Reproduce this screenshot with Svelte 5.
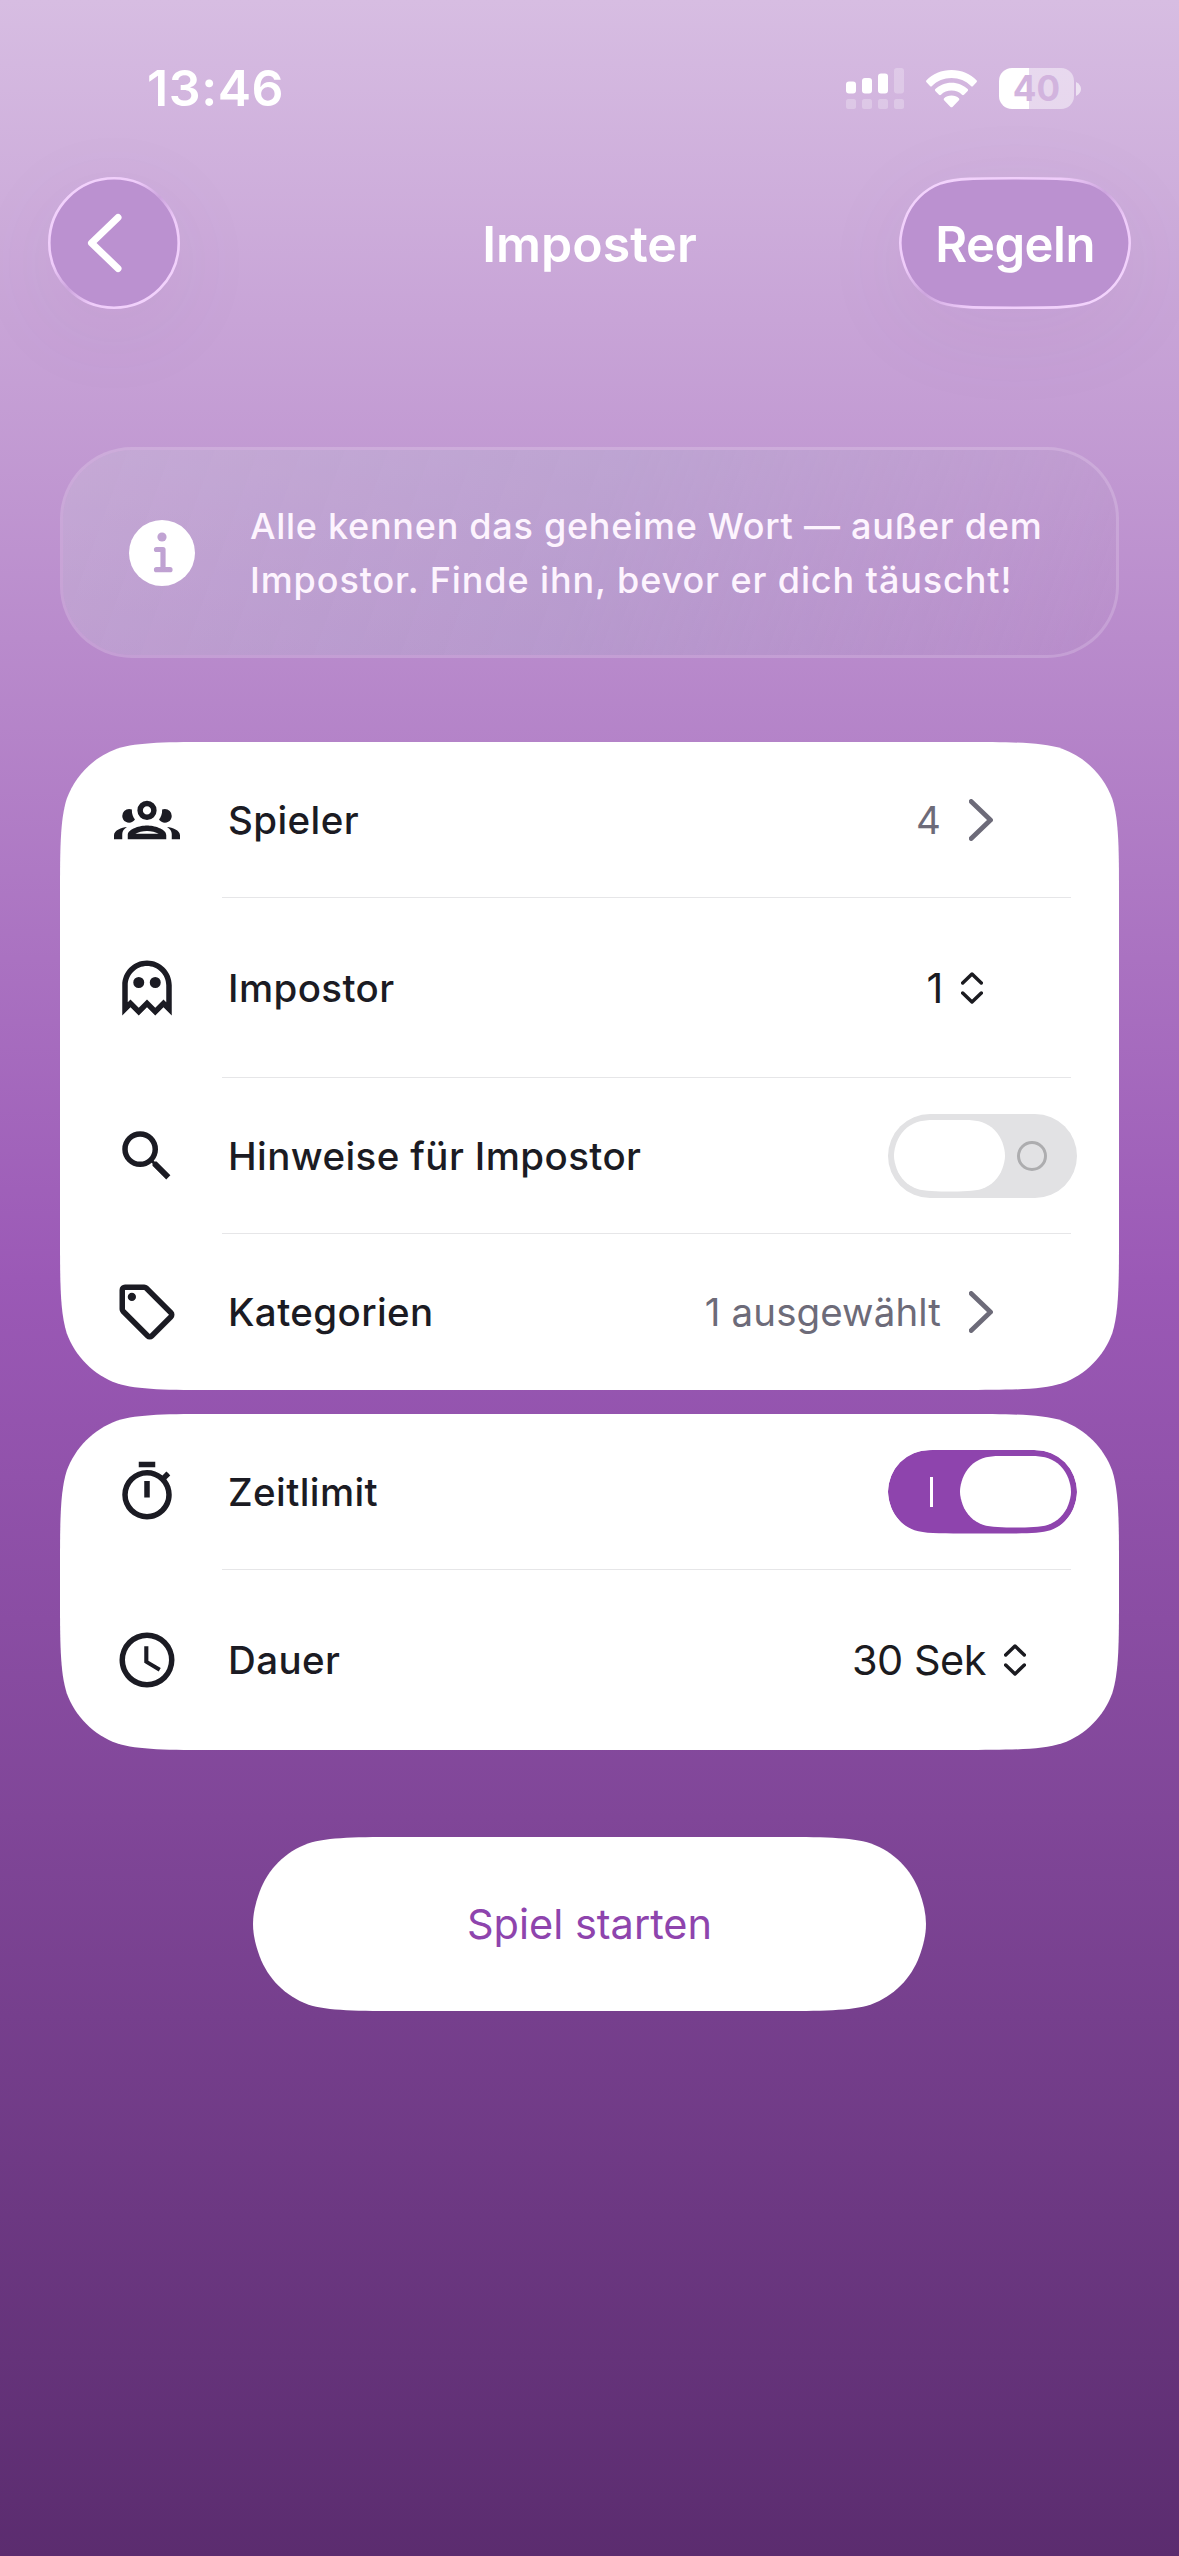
<svelte:head>
	<title>Imposter</title>
</svelte:head>

<script>
	let hints = false;
	let timeLimit = true;

	const icons = {
		group: "M12,5A3.5,3.5 0 0,0 8.5,8.5A3.5,3.5 0 0,0 12,12A3.5,3.5 0 0,0 15.5,8.5A3.5,3.5 0 0,0 12,5M12,7A1.5,1.5 0 0,1 13.5,8.5A1.5,1.5 0 0,1 12,10A1.5,1.5 0 0,1 10.5,8.5A1.5,1.5 0 0,1 12,7M5.5,8A2.5,2.5 0 0,0 3,10.5C3,11.44 3.53,12.25 4.29,12.68C4.65,12.88 5.06,13 5.5,13C5.94,13 6.35,12.88 6.71,12.68C7.08,12.47 7.39,12.17 7.62,11.81C6.89,10.86 6.5,9.7 6.5,8.5C6.5,8.41 6.5,8.31 6.5,8.22C6.2,8.08 5.86,8 5.5,8M18.5,8C18.14,8 17.8,8.08 17.5,8.22C17.5,8.31 17.5,8.41 17.5,8.5C17.5,9.7 17.11,10.86 16.38,11.81C16.5,12 16.63,12.15 16.78,12.3C16.94,12.45 17.1,12.58 17.29,12.68C17.65,12.88 18.06,13 18.5,13C18.94,13 19.35,12.88 19.71,12.68C20.47,12.25 21,11.44 21,10.5A2.5,2.5 0 0,0 18.5,8M12,14C9.66,14 5,15.17 5,17.5V19H19V17.5C19,15.17 14.34,14 12,14M4.71,14.55C2.78,14.78 0,15.76 0,17.5V19H3V17.07C3,16.06 3.69,15.22 4.71,14.55M19.29,14.55C20.31,15.22 21,16.06 21,17.07V19H24V17.5C24,15.76 21.22,14.78 19.29,14.55M12,16C13.53,16 15.24,16.5 16.23,17H7.77C8.76,16.5 10.47,16 12,16Z",
		ghost: "M12 2C7.03 2 3 6.03 3 11V22L6 19L9 22L12 19L15 22L18 19L21 22V11C21 6.03 16.97 2 12 2M19 17.17L18 16.17L15 19.17L12 16.17L9 19.17L6 16.17L5 17.17V11C5 7.14 8.14 4 12 4S19 7.14 19 11V17.17M11 10A2 2 0 1 1 7 10A2 2 0 1 1 11 10M17 10A2 2 0 1 1 13 10A2 2 0 1 1 17 10Z",
		search: "M9.5,3A6.5,6.5 0 0,1 16,9.5C16,11.11 15.41,12.59 14.44,13.73L14.71,14H15.5L20.5,19L19,20.5L14,15.5V14.71L13.73,14.44C12.59,15.41 11.11,16 9.5,16A6.5,6.5 0 0,1 3,9.5A6.5,6.5 0 0,1 9.5,3M9.5,5C7,5 5,7 5,9.5C5,12 7,14 9.5,14C12,14 14,12 14,9.5C14,7 12,5 9.5,5Z",
		tag: "M21.41 11.58L12.41 2.58A2 2 0 0 0 11 2H4A2 2 0 0 0 2 4V11A2 2 0 0 0 2.59 12.42L11.59 21.42A2 2 0 0 0 13 22A2 2 0 0 0 14.41 21.41L21.41 14.41A2 2 0 0 0 22 13A2 2 0 0 0 21.41 11.58M13 20L4 11V4H11L20 13M6.5 5A1.5 1.5 0 1 1 5 6.5A1.5 1.5 0 0 1 6.5 5Z",
		timer: "M12,20A7,7 0 0,1 5,13A7,7 0 0,1 12,6A7,7 0 0,1 19,13A7,7 0 0,1 12,20M19.03,7.39L20.45,5.97C20,5.46 19.55,5 19.04,4.56L17.62,6C16.07,4.74 14.12,4 12,4A9,9 0 0,0 3,13A9,9 0 0,0 12,22C17,22 21,17.97 21,13C21,10.88 20.26,8.93 19.03,7.39M11,14H13V8H11M15,1H9V3H15V1Z",
		clock: "M12,20A8,8 0 0,0 20,12A8,8 0 0,0 12,4A8,8 0 0,0 4,12A8,8 0 0,0 12,20M12,2A10,10 0 0,1 22,12A10,10 0 0,1 12,22C6.47,22 2,17.5 2,12A10,10 0 0,1 12,2M12.5,7V12.25L17,14.92L16.25,16.15L11,13V7H12.5Z",
	};

	$: cards = [
		[
			{icon: "group", label: "Spieler", value: "4", type: "link"},
			{icon: "ghost", label: "Impostor", value: "1", type: "select", size: "short"},
			{icon: "search", label: "Hinweise für Impostor", type: "switch", on: hints},
			{icon: "tag", label: "Kategorien", value: "1 ausgewählt", type: "link"},
		],
		[
			{icon: "timer", label: "Zeitlimit", type: "switch", on: timeLimit},
			{icon: "clock", label: "Dauer", value: "30 Sek", type: "select", size: "long"},
		],
	];

	// 156px rows, select rows are 180px
	function cardHeight(rows) {
		return rows.reduce((h, row) => h + (row.type == "select" ? 180 : 156), 0);
	}

	// rounded rect with continuous corners; o = inset for strokes
	function smooth(w, h, r, o = 0) {
		w -= 2 * o; h -= 2 * o; r -= o;
		const capsule = h / 2 < r * 1.5;
		const tail = capsule ? [[0.032, 0.75], [0, 0.874], [0, h / 2 / r]] : [[0, 0.868], [0, 1.2], [0, 1.75]];
		const top = Math.min(1.75, w / 2 / r);
		const pts = [[top, 0], [Math.min(1.2, top), 0], [0.868, 0], [0.6315, 0.0749], [0.3728, 0.1691], [0.1691, 0.3728], [0.0749, 0.6315], ...tail];
		const at = (p, fx, fy) => {
			const x = p[0] * r, y = p[1] * r;
			return (o + (fx ? w - x : x)).toFixed(2) + " " + (o + (fy ? h - y : y)).toFixed(2);
		};
		const corner = (list, fx, fy) => {
			const c = list.map(p => at(p, fx, fy));
			return `L${c[0]}C${c[1]} ${c[2]} ${c[3]}C${c[4]} ${c[5]} ${c[6]}C${c[7]} ${c[8]} ${c[9]}`;
		};
		const back = [...pts].reverse();
		return "M" + at(pts[0], 0, 0) + corner(pts, 1, 0) + corner(back, 1, 1) + corner(pts, 0, 1) + corner(back, 0, 0) + "Z";
	}

	function clip(w, h, r) {
		return `clip-path: path("${smooth(w, h, r)}")`;
	}

	function flip(row) {
		if (row.icon == "search") hints = !hints;
		else timeLimit = !timeLimit;
	}
</script>

<div class="screen">
	<div class="status">
		<span class="time">13:46</span>
		<div class="indicators">
			<svg class="signal" width="58" height="42" viewBox="0 0 58 42" fill="#fff">
				<rect x="0" y="13.5" width="10" height="12" rx="3" />
				<rect x="16" y="10" width="10" height="15.5" rx="3" />
				<rect x="32" y="5.5" width="10" height="20" rx="3" />
				<g opacity=".26">
					<rect x="48" y="0" width="10" height="25.5" rx="3" />
					<rect x="0" y="31" width="10" height="10" rx="2.5" />
					<rect x="16" y="31" width="10" height="10" rx="2.5" />
					<rect x="32" y="31" width="10" height="10" rx="2.5" />
					<rect x="48" y="31" width="10" height="10" rx="2.5" />
				</g>
			</svg>
			<svg class="wifi" width="51" height="38" viewBox="0 0 51 38" fill="#fff">
				<path d="M25.5 0C35.5 0 44.5 4 50.5 10.3Q51.4 11.3 50.5 12.3L47 15.9Q46 16.9 45 15.9C40 11 33 8 25.5 8S11 11 6 15.9Q5 16.9 4 15.9L.5 12.3Q-.4 11.3 .5 10.3C6.5 4 15.5 0 25.5 0Z" />
				<path d="M25.5 12.7C32 12.7 37.5 15.2 41.7 19.1Q42.6 20.1 41.7 21.1L38 24.7Q37 25.6 36 24.7C33.2 22.1 29.6 20.6 25.5 20.6S17.8 22.1 15 24.7Q14 25.6 13 24.7L9.3 21.1Q8.4 20.1 9.3 19.1C13.5 15.2 19 12.7 25.5 12.7Z" />
				<path d="M25.5 25.6C28.6 25.6 31 26.7 32.9 28.2Q33.9 29.2 32.9 30.2L26.7 36.7Q25.5 37.8 24.3 36.7L18.1 30.2Q17.1 29.2 18.1 28.2C20 26.7 22.4 25.6 25.5 25.6Z" />
			</svg>
			<div class="battery">
				<div class="level">40</div>
				<svg width="5" height="14" viewBox="0 0 5 14"><path d="M0 0C3 1.5 5 4 5 7S3 12.5 0 14Z" fill="#fff" opacity=".6" /></svg>
			</div>
		</div>
	</div>

	<header>
		<button class="glass back" aria-label="Zurück">
			<svg class="shape" width="132" height="132">
				<defs>
					<linearGradient id="rim" x1="0" y1="0" x2="1" y2="1">
						<stop offset="0" stop-color="#f4d6fd" />
						<stop offset=".35" stop-color="#efccfa" />
						<stop offset=".5" stop-color="#cda5de" />
						<stop offset=".65" stop-color="#efccfa" />
						<stop offset="1" stop-color="#f4d6fd" />
					</linearGradient>
				</defs>
				<circle cx="66" cy="66" r="64.7" />
			</svg>
			<svg class="arrow" width="36" height="60" viewBox="0 0 36 60"><path d="M31 4.5L4.5 30L31 55.5" /></svg>
		</button>
		<h1>Imposter</h1>
		<button class="glass rules">
			<svg class="shape" width="232" height="132"><path d={smooth(232, 132, 66, 1.3)} /></svg>
			<span>Regeln</span>
		</button>
	</header>

	<section class="info">
		<svg width="66" height="66" viewBox="0 0 66 66">
			<mask id="letter">
				<rect width="66" height="66" fill="#fff" />
				<circle cx="33" cy="17" r="4.6" />
				<path d="M27.5 29.5H34V49.7M27.5 49.7H41" fill="none" stroke="#000" stroke-width="5.2" stroke-linecap="round" stroke-linejoin="round" />
			</mask>
			<circle cx="33" cy="33" r="33" fill="#fff" mask="url(#letter)" />
		</svg>
		<p>Alle kennen das geheime Wort — außer dem<br><span class="second">Impostor. Finde ihn, bevor er dich täuscht!</span></p>
	</section>

	<main>
		{#each cards as rows}
			<div class="card" style={clip(1059, cardHeight(rows), 90)}>
				{#each rows as row}
					<div class="row {row.type} {row.size || ''}">
						<svg class="icon" width="66" height="66" viewBox="0 0 24 24"><path d={icons[row.icon]} /></svg>
						<div class="content">
							<span class="label">{row.label}</span>
							{#if row.type == "link"}
								<span class="value">{row.value}</span>
								<svg class="chevron" width="24" height="42" viewBox="0 0 24 42"><path d="M2.2 2.5L21.5 21L2.2 39.5" /></svg>
							{:else if row.type == "select"}
								<span class="value">{row.value}</span>
								<svg class="updown" width="22" height="32" viewBox="0 0 22 32"><path d="M1.7 11L11 2L20.3 11M1.7 21L11 30L20.3 21" /></svg>
							{:else}
								<button class="toggle" class:on={row.on} style={row.on ? clip(189, 84, 42) : ""} aria-label={row.label} on:click={() => flip(row)}>
									<span class="thumb" style={clip(111, 72, 36)}></span>
									<span class="mark"></span>
								</button>
							{/if}
						</div>
					</div>
				{/each}
			</div>
		{/each}
	</main>

	<button class="start" style={clip(673, 174, 87)}>Spiel starten</button>
</div>

<style>
	:global(body) {
		margin: 0;
	}
	.screen {
		display: flex;
		flex-direction: column;
		width: 1179px;
		height: 2556px;
		overflow: hidden;
		background: linear-gradient(#d7bde2, #9b59b6 50%, #5b2c6f);
		font-family: Inter, "Liberation Sans", sans-serif;
		color: #fff;
	}
	button {
		border: 0;
		padding: 0;
		background: none;
		font-family: inherit;
		color: inherit;
	}

	.status {
		display: flex;
		align-items: center;
		justify-content: space-between;
		box-sizing: border-box;
		height: 177px;
		padding: 0 98px 0 147px;
	}
	.time {
		padding-bottom: 2px;
		font-size: 50px;
		font-weight: 600;
		letter-spacing: 0.6px;
	}
	.indicators {
		display: flex;
		align-items: center;
	}
	.wifi {
		margin: 0 22px;
	}
	.battery {
		display: flex;
		align-items: center;
		gap: 2px;
	}
	.level {
		width: 75px;
		height: 41px;
		border-radius: 13px;
		background: linear-gradient(90deg, #fff 40%, rgba(255, 255, 255, 0.47) 40%);
		color: #d2b4de;
		font-size: 35px;
		font-weight: 700;
		line-height: 41px;
		text-align: center;
	}

	header {
		display: flex;
		align-items: center;
		justify-content: space-between;
		height: 132px;
		padding: 0 48px;
	}
	h1 {
		flex: 1;
		margin: 0 0 0 100px;
		padding-top: 2px;
		font-size: 50px;
		font-weight: 600;
		text-align: center;
	}
	.glass {
		display: flex;
		position: relative;
		align-items: center;
		justify-content: center;
		height: 132px;
		border-radius: 66px;
		box-shadow: 0 20px 100px rgba(120, 60, 150, 0.06);
	}
	.back {
		width: 132px;
	}
	.rules {
		width: 232px;
		font-size: 49px;
		font-weight: 600;
		letter-spacing: -0.5px;
	}
	.rules span {
		position: relative;
		padding-top: 2px;
	}
	.shape {
		position: absolute;
		inset: 0;
		fill: #bb91d0;
		stroke: url(#rim);
		stroke-width: 2.6;
	}
	.arrow {
		position: relative;
		margin-right: 19px;
		fill: none;
		stroke: #fff;
		stroke-width: 7;
		stroke-linecap: round;
		stroke-linejoin: round;
	}

	.info {
		display: flex;
		align-items: center;
		box-sizing: border-box;
		height: 211px;
		margin: 138px 60px 84px;
		padding-left: 66px;
		border: 3px solid rgba(255, 255, 255, 0.18);
		border-radius: 72px;
		background: linear-gradient(110deg, rgba(205, 200, 220, 0.34), rgba(180, 190, 210, 0.29) 50%, rgba(190, 180, 200, 0.08));
		background-clip: padding-box;
	}
	.info p {
		margin: 0 0 0 55px;
		font-size: 36px;
		font-weight: 500;
		letter-spacing: 0.73px;
		line-height: 54px;
		white-space: nowrap;
		color: #fdf4fe;
	}
	.second {
		letter-spacing: 0.9px;
	}

	main {
		display: flex;
		flex-direction: column;
		gap: 24px;
		padding: 0 60px;
	}
	.card {
		background: #fff;
	}
	.row {
		display: flex;
		align-items: center;
		height: 156px;
		padding-left: 54px;
	}
	.row.select {
		height: 180px;
	}
	.icon {
		fill: #1b1b23;
	}
	.content {
		display: flex;
		flex: 1;
		align-items: center;
		height: 100%;
		margin: 0 48px 0 42px;
		padding-left: 6px;
		box-sizing: border-box;
	}
	.row:not(:last-child) .content {
		border-bottom: 1px solid #e6e6e8;
	}
	.label {
		flex: 1;
		font-size: 38.5px;
		font-weight: 500;
		letter-spacing: 0.4px;
		color: #1b1b23;
	}
	.value {
		font-size: 38.5px;
		letter-spacing: 0.1px;
		color: #6d6b79;
	}
	.chevron {
		margin: 0 78px 0 28px;
		fill: none;
		stroke: #6d6b79;
		stroke-width: 4.8;
		stroke-linecap: round;
		stroke-linejoin: round;
	}
	.select .value {
		font-size: 41.5px;
		letter-spacing: -0.5px;
		color: #1b1b20;
	}
	.updown {
		margin-left: 18px;
		fill: none;
		stroke: #1b1b20;
		stroke-width: 3.5;
		stroke-linecap: round;
		stroke-linejoin: round;
	}
	.short .updown {
		margin-right: 88px;
	}
	.long .updown {
		margin-right: 45px;
	}
	.toggle {
		display: flex;
		align-items: center;
		width: 189px;
		height: 84px;
		margin-right: -6px;
		padding: 0 6px;
		border-radius: 42px;
		background: #e2e2e4;
	}
	.thumb {
		width: 111px;
		height: 72px;
		background: #fff;
	}
	.mark {
		box-sizing: border-box;
		width: 30px;
		height: 30px;
		margin-left: 12px;
		border: 3px solid #adadaf;
		border-radius: 50%;
	}
	.toggle.on {
		flex-direction: row-reverse;
		background: #8e44ad;
	}
	.on .mark {
		width: 3px;
		margin: 0 27px 0 0;
		border: 0;
		border-radius: 0;
		background: #fff;
	}

	.start {
		align-self: center;
		width: 673px;
		height: 174px;
		margin-top: 87px;
		background: #fff;
		font-size: 41.5px;
		color: #8e44ad;
	}
</style>
